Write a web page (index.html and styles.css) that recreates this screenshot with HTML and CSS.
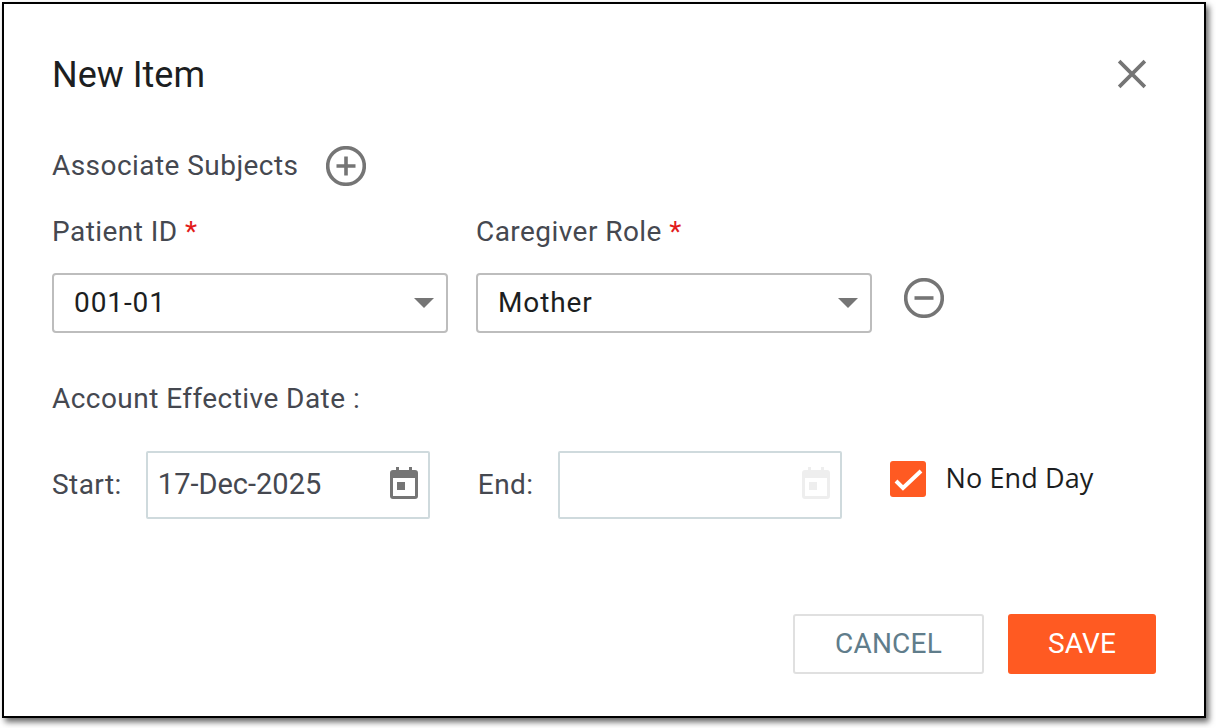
FILE: index.html
```html
<!DOCTYPE html>
<html lang="en">
  <head>
    <meta charset="UTF-8" />
    <title>New Item</title>
    <link rel="stylesheet" href="styles.css">
  </head>
  <body>
    <section class="dialog">
      <header class="dialog-header">
        <h1>New Item</h1>
        <svg class="close" viewBox="0 0 28 28"><path d="M2 2 L26 26 M26 2 L2 26" /></svg>
      </header>

      <div class="subjects">
        <span class="label">Associate Subjects</span>
        <svg class="round-icon" viewBox="0 0 40 40"><circle cx="20" cy="20" r="18.3" /><path d="M20 10.5 V29.5 M10.5 20 H29.5" /></svg>
      </div>

      <div class="select-row">
        <div class="field">
          <label class="label">Patient ID <span class="req">*</span></label>
          <div class="select">001-01<i class="caret"></i></div>
        </div>
        <div class="field">
          <label class="label">Caregiver Role <span class="req">*</span></label>
          <div class="select">Mother<i class="caret"></i></div>
        </div>
        <svg class="round-icon remove" viewBox="0 0 40 40"><circle cx="20" cy="20" r="18.3" /><path d="M10.5 20 H29.5" /></svg>
      </div>

      <p class="label date-title">Account Effective Date :</p>

      <div class="date-row">
        <span class="label">Start:</span>
        <div class="date-input start">
          17-Dec-2025
          <svg class="cal" viewBox="0 0 28 32"><path fill-rule="evenodd" d="M6 0h3v3h10V0h3v3h3a3 3 0 0 1 3 3v23a3 3 0 0 1-3 3H3a3 3 0 0 1-3-3V6a3 3 0 0 1 3-3h3zM3 11v18h22V11zM7 15h8v8H7z" /></svg>
        </div>
        <span class="label end-label">End:</span>
        <div class="date-input end">
          <svg class="cal off" viewBox="0 0 28 32"><path fill-rule="evenodd" d="M6 0h3v3h10V0h3v3h3a3 3 0 0 1 3 3v23a3 3 0 0 1-3 3H3a3 3 0 0 1-3-3V6a3 3 0 0 1 3-3h3zM3 11v18h22V11zM7 15h8v8H7z" /></svg>
        </div>
        <div class="check-wrap">
          <span class="check"><svg viewBox="0 0 36 36"><path d="M6 20 L13 27 L31 10" /></svg></span>
          <span class="check-text">No End Day</span>
        </div>
      </div>

      <footer class="actions">
        <button class="btn cancel">CANCEL</button>
        <button class="btn save">SAVE</button>
      </footer>
    </section>
  </body>
</html>
```

FILE: styles.css
```css
html {
  box-sizing: border-box;
  font-family: Roboto, sans-serif;
}

*,
*:before,
*:after {
  box-sizing: inherit;
}

body {
  margin: 0;
  min-height: 100vh;
  padding: 2px;
  background-color: #fff;
}

.dialog {
  display: flex;
  flex-direction: column;
  width: 1204px;
  height: 716px;
  padding: 0 48px;
  background-color: #fff;
  border: 2px solid #000;
  box-shadow: 3px 4px 6px rgba(0, 0, 0, 0.6);
}

.dialog-header {
  display: flex;
  justify-content: space-between;
  align-items: center;
  height: 46px;
  margin-top: 46px;
  padding-right: 9px;
}

.dialog-header h1 {
  margin: 3px 0 0;
  font-size: 36px;
  font-weight: 400;
  color: #1c1e21;
}

.close {
  width: 30px;
  height: 30px;
  margin-top: 2px;
  fill: none;
  stroke: #757575;
  stroke-width: 3.4;
}

.label {
  font-size: 28px;
  color: #454850;
  letter-spacing: 0.45px;
}

.subjects {
  display: flex;
  align-items: center;
  gap: 28px;
  height: 40px;
  margin-top: 50px;
}

.subjects .label,
.date-row .label {
  margin-bottom: 2px;
}

.round-icon {
  width: 40px;
  height: 40px;
  fill: none;
  stroke: #757575;
  stroke-width: 3.6;
}

.select-row {
  display: flex;
  gap: 28px;
  margin-top: 29px;
}

.field {
  display: flex;
  flex-direction: column;
}

.req {
  color: #e21b1b;
}

.select {
  display: flex;
  justify-content: space-between;
  align-items: center;
  width: 396px;
  height: 60px;
  margin-top: 25px;
  padding: 0 12px 2px 20px;
  font-size: 28px;
  letter-spacing: 0.9px;
  color: #1c1e21;
  border: 2px solid #bdbdbd;
  border-radius: 4px;
}

.caret {
  width: 0;
  height: 0;
  margin-top: 2px;
  border-left: 10px solid transparent;
  border-right: 10px solid transparent;
  border-top: 10px solid #757575;
}

.remove {
  margin-top: 63px;
  margin-left: 4px;
}

.date-title {
  margin: 49px 0 0;
}

.date-row {
  display: flex;
  align-items: center;
  margin-top: 36px;
}

.date-input {
  display: flex;
  justify-content: space-between;
  align-items: center;
  width: 284px;
  height: 68px;
  padding: 0 10px 2px 10px;
  font-size: 29px;
  color: #454850;
  border: 2px solid #cfdadd;
  border-radius: 2px;
}

.start {
  margin-left: 24px;
}

.end-label {
  margin-left: 48px;
}

.end {
  justify-content: flex-end;
  margin-left: 24px;
}

.cal {
  width: 28px;
  height: 32px;
  margin-bottom: 2px;
  fill: #757575;
}

.cal.off {
  fill: #eeeeee;
}

.check-wrap {
  display: flex;
  align-items: center;
  gap: 20px;
  margin-left: 48px;
  margin-bottom: 12px;
}

.check {
  display: flex;
  width: 36px;
  height: 36px;
  background-color: #ff5a22;
  border-radius: 3px;
}

.check svg {
  fill: none;
  stroke: #fff;
  stroke-width: 4;
}

.check-text {
  margin-bottom: 4px;
  font-family: "Open Sans", sans-serif;
  font-size: 27px;
  letter-spacing: 0.1px;
  color: #1c1e21;
}

.actions {
  display: flex;
  justify-content: flex-end;
  gap: 24px;
  margin-top: 95px;
}

.btn {
  height: 60px;
  padding-bottom: 3px;
  font-family: Roboto, sans-serif;
  font-size: 28px;
  letter-spacing: 0.2px;
  border-radius: 3px;
}

.cancel {
  width: 191px;
  color: #607d8b;
  background-color: #fff;
  border: 2px solid #e0e0e0;
}

.save {
  width: 148px;
  color: #fff;
  background-color: #ff5a22;
  border: none;
}
```
